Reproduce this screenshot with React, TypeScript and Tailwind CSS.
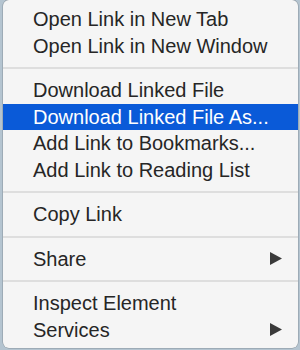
import React from "react";

type Item = { label: string; highlighted?: boolean; submenu?: boolean } | "sep";

const items: Item[] = [
  { label: "Open Link in New Tab" },
  { label: "Open Link in New Window" },
  "sep",
  { label: "Download Linked File" },
  { label: "Download Linked File As...", highlighted: true },
  { label: "Add Link to Bookmarks..." },
  { label: "Add Link to Reading List" },
  "sep",
  { label: "Copy Link" },
  "sep",
  { label: "Share", submenu: true },
  "sep",
  { label: "Inspect Element" },
  { label: "Services", submenu: true },
];

function Arrow({ white }: { white?: boolean }) {
  return (
    <svg width="12" height="13" viewBox="0 0 12 13" className="shrink-0">
      <polygon points="0,0 12,6.5 0,13" fill={white ? "#ffffff" : "#3a3a3a"} />
    </svg>
  );
}

export default function App() {
  return (
    <div className="w-[300px] h-[350px] bg-[#b4c4d0] pl-[3px] overflow-hidden">
      <div
        className="w-[295px] h-[348px] bg-[#f5f5f5] rounded-[6px] pt-[6px] overflow-hidden shadow-[0_0_0_0.5px_rgba(0,0,0,0.25)]"
        style={{ fontFamily: '"Liberation Sans", Arial, sans-serif' }}
      >
        {items.map((it, i) =>
          it === "sep" ? (
            <div key={i} className="h-[18px] flex items-center">
              <div className="w-full h-[2px] bg-[#dedede]" />
            </div>
          ) : (
            <div
              key={i}
              className={
                "h-[26.5px] flex items-center justify-between pl-[30px] pr-[16px] text-[20px] leading-[26.5px] " +
                (it.highlighted ? "bg-[#0a5ad8] text-white" : "text-[#262626]")
              }
            >
              <span className="whitespace-nowrap">{it.label}</span>
              {it.submenu && <Arrow white={it.highlighted} />}
            </div>
          )
        )}
      </div>
    </div>
  );
}
